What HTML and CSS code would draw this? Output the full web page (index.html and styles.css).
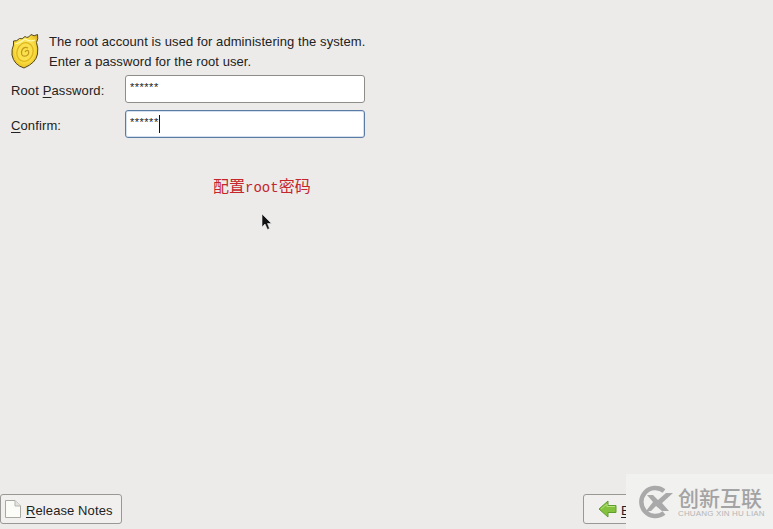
FILE: index.html
```html
<!DOCTYPE html>
<html lang="en">
<head>
  <meta charset="UTF-8" />
  <title>Root Password</title>
  <link rel="stylesheet" href="styles.css">
</head>
<body>
  <main class="content">
    <div class="intro">
      <svg class="badge" width="28" height="37" viewBox="0 0 28 37">
        <defs>
          <radialGradient id="gold" cx="0.5" cy="0.45" r="0.65">
            <stop offset="0" stop-color="#fff48a"/>
            <stop offset="0.6" stop-color="#f8dc3c"/>
            <stop offset="1" stop-color="#dba91a"/>
          </radialGradient>
        </defs>
        <path d="M2.5 9 Q6 9.5 8.5 6.5 Q11 8 14 4.5 Q17 7 20 2.5 Q23 5 26.5 2.5 Q27.5 7 25.5 10.5 Q27.5 16 26.5 22 Q25 31 13 36 Q3 33 1 23 Q0.5 17 2.5 13 Z" fill="url(#gold)" stroke="#55481c" stroke-width="1"/>
        <path d="M4 12 Q9 11 14 7 Q19 10 24 8" fill="none" stroke="#fff8b0" stroke-width="1.2"/>
        <ellipse cx="14" cy="20" rx="8" ry="9.5" fill="#f9e04c" stroke="#e0b520" stroke-width="1.4" transform="rotate(20 14 20)"/>
        <path d="M17 16 Q12 14 10.5 19.5 Q10 25 15 24 Q18.5 22.5 17.5 19 Q15.5 17.5 14 20" fill="none" stroke="#c2981a" stroke-width="1.2"/>
      </svg>
      <p class="intro-text">The root account is used for administering the system.<br>Enter a password for the root user.</p>
    </div>
    <div class="form-row">
      <label class="field-label">Root <u>P</u>assword:</label>
      <div class="entry">******</div>
    </div>
    <div class="form-row">
      <label class="field-label"><u>C</u>onfirm:</label>
      <div class="entry entry-focus">******<span class="caret"></span></div>
    </div>
    <div class="note">配置<span class="note-latin">root</span>密码</div>
  </main>

  <footer class="button-bar">
    <button class="btn btn-notes">
      <svg width="18" height="20" viewBox="0 0 18 20">
        <path d="M1.5 1.5 H11 L16.5 7 V18.5 H1.5 Z" fill="#fbfbf8" stroke="#a9a9a4"/>
        <path d="M11 1.5 V7 H16.5" fill="#e4e4de" stroke="#b5b5af"/>
      </svg>
      <span class="btn-label"><u>R</u>elease Notes</span>
    </button>
    <button class="btn btn-back">
      <svg width="19" height="18" viewBox="0 0 19 18">
        <path d="M1 9 L10 1 V5.5 H18 V12.5 H10 V17 Z" fill="#84c23e" stroke="#5f9e2c"/>
        <path d="M3 9 L9 4 V6.5 H17" fill="none" stroke="#b6e07a"/>
      </svg>
      <span class="btn-label"><u>B</u>ack</span>
    </button>
  </footer>

  <svg class="pointer" width="12" height="18" viewBox="0 0 12 18">
    <path d="M1 1 V14 L4 11 L6.5 16.5 L8.5 15.5 L6.5 10.5 H10.5 Z" fill="#111" stroke="#eee" stroke-width="0.6"/>
  </svg>

  <aside class="watermark">
    <svg class="wm-logo" width="35" height="34" viewBox="0 0 35 34">
      <path d="M26 6 A14 14 0 1 0 26 28" fill="none" stroke="#a9a9a9" stroke-width="4.5"/>
      <path d="M9 10 H15 L20 15 L28 8 H35 L24 18 L31 26 H24 L18 21 L13 26 H8 L15 17 Z" fill="#a9a9a9"/>
    </svg>
    <div class="wm-text">
      <div class="wm-name">创新互联</div>
      <div class="wm-pinyin">CHUANG XIN HU LIAN</div>
    </div>
  </aside>
</body>
</html>
```

FILE: styles.css
```css
html, body {
  height: 100%;
  margin: 0;
  padding: 0;
}
body {
  position: relative;
  display: flex;
  flex-direction: column;
  overflow: hidden;
  background: #edebe9;
  color: #222;
  font-family: "Liberation Sans", Arial, sans-serif;
  font-size: 13px;
}
u {
  text-underline-offset: 2px;
}
.content {
  flex: 1;
  padding: 32px 0 0 11px;
}
.intro {
  display: flex;
  align-items: flex-start;
  gap: 10px;
  height: 42px;
}
.badge {
  flex: none;
}
.intro-text {
  margin: 0;
  line-height: 20px;
  letter-spacing: 0.08px;
}
.form-row {
  display: flex;
  align-items: center;
  height: 29px;
  margin-bottom: 6px;
}
.field-label {
  width: 114px;
  padding-top: 4px;
  letter-spacing: 0.12px;
}
.entry {
  display: flex;
  align-items: center;
  box-sizing: border-box;
  width: 240px;
  height: 28px;
  padding: 0 0 4px 4px;
  background: #fff;
  border: 1px solid #8f8d89;
  border-radius: 3px;
  font-size: 11px;
  letter-spacing: 0.5px;
}
.entry-focus {
  border-color: #5a7ba3;
  box-shadow: inset 0 0 0 1px #d4e0ee;
}
.caret {
  width: 1px;
  height: 18px;
  margin: 4px 0 0 0;
  background: #111;
}
.note {
  margin: 36px 0 0 202px;
  color: #c4262c;
  font-family: "Noto Sans CJK SC", sans-serif;
  font-size: 16px;
  line-height: 22px;
}
.note-latin {
  font-family: "Liberation Mono", monospace;
  font-size: 14px;
}
.button-bar {
  display: flex;
  justify-content: space-between;
  padding: 0 0 5px 0;
}
.btn {
  display: flex;
  align-items: center;
  gap: 4px;
  height: 30px;
  padding: 0 8px 0 3px;
  background: #f2f0ee;
  border: 1px solid #9a9894;
  border-radius: 3px;
  color: #222;
  font: inherit;
  letter-spacing: 0.1px;
}
.btn-label {
  padding-top: 2px;
  white-space: nowrap;
}
.btn-notes {
  width: 122px;
}
.btn-back {
  width: 80px;
  margin-right: 110px;
  padding-left: 14px;
}
.pointer {
  position: absolute;
  left: 261px;
  top: 213px;
}
.watermark {
  position: absolute;
  right: 0;
  bottom: 0;
  display: flex;
  align-items: center;
  gap: 5px;
  box-sizing: border-box;
  width: 147px;
  height: 55px;
  padding: 0 0 0 12px;
  background: #f1f1f0;
}
.wm-logo {
  flex: none;
}
.wm-name {
  color: #a3a3a3;
  font-family: "Noto Sans CJK SC", sans-serif;
  font-size: 21px;
  font-weight: 500;
  line-height: 24px;
  white-space: nowrap;
}
.wm-pinyin {
  color: #b5b5b5;
  font-size: 8px;
  line-height: 9px;
  letter-spacing: 0.15px;
  white-space: nowrap;
}
```
